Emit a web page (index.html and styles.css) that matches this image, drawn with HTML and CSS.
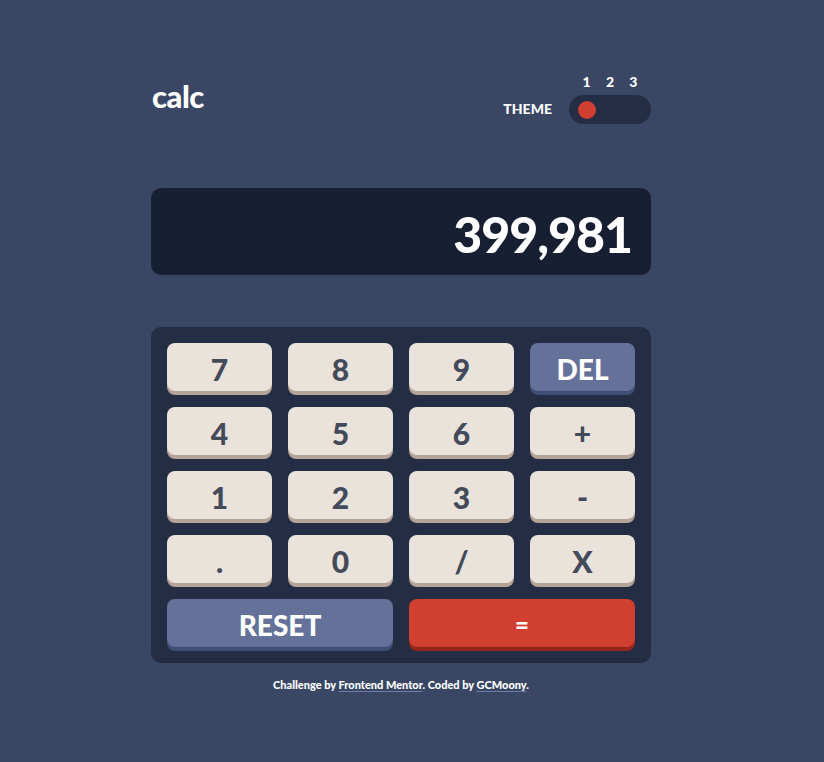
FILE: index.html
```html
<!DOCTYPE html>
<html lang="en">
<head>
<meta charset="utf-8">
<title>calc</title>
<link rel="stylesheet" href="styles.css">
</head>
<body>
<div class="page">
  <main class="calc">
    <header class="header">
      <h1 class="logo">calc</h1>
      <div class="theme">
        <span class="theme-label">THEME</span>
        <div class="switch">
          <div class="switch-nums"><span>1</span><span>2</span><span>3</span></div>
          <div class="switch-track"><span class="switch-knob"></span></div>
        </div>
      </div>
    </header>
    <section class="display"><span class="display-value">399,981</span></section>
    <section class="keypad">
      <button class="key">7</button>
      <button class="key">8</button>
      <button class="key">9</button>
      <button class="key key-blue">DEL</button>
      <button class="key">4</button>
      <button class="key">5</button>
      <button class="key">6</button>
      <button class="key">+</button>
      <button class="key">1</button>
      <button class="key">2</button>
      <button class="key">3</button>
      <button class="key">-</button>
      <button class="key">.</button>
      <button class="key">0</button>
      <button class="key">/</button>
      <button class="key">X</button>
      <button class="key key-blue key-wide">RESET</button>
      <button class="key key-red key-wide">=</button>
    </section>
    <footer class="footer">Challenge by <a href="#">Frontend Mentor</a>. Coded by <a href="#">GCMoony</a>.</footer>
  </main>
</div>
</body>
</html>
```
FILE: styles.css
```css
* { box-sizing: border-box; }
html, body { margin: 0; padding: 0; }
body {
  background: #3a4764;
  font-family: "Lato", "Inter", sans-serif;
  font-weight: 900;
  color: #ffffff;
  min-height: 100vh;
}
.page {
  display: flex;
  justify-content: center;
  padding-right: 22px;
}
.calc {
  width: 500px;
  padding-top: 74px;
}
.header {
  display: flex;
  justify-content: space-between;
  align-items: flex-end;
  height: 50px;
}
.logo {
  margin: 0 0 12px 1px;
  font-size: 31px;
  line-height: 1;
  font-weight: 900;
  letter-spacing: -0.5px;
}
.theme {
  display: flex;
  align-items: flex-end;
  gap: 17px;
}
.theme-label {
  font-size: 14px;
  line-height: 1;
  margin-bottom: 8px;
}
.switch {
  display: flex;
  flex-direction: column;
  gap: 6px;
  width: 82px;
}
.switch-nums {
  display: grid;
  grid-template-columns: repeat(3, 1fr);
  padding: 0 6px;
  font-size: 14px;
  line-height: 15px;
  text-align: center;
}
.switch-track {
  display: grid;
  grid-template-columns: repeat(3, 1fr);
  align-items: center;
  justify-items: center;
  height: 29px;
  padding: 0 6px;
  border-radius: 15px;
  background: #242d44;
}
.switch-knob {
  width: 18px;
  height: 18px;
  border-radius: 50%;
  background: #d03f2f;
}
.display {
  margin-top: 64px;
  height: 87px;
  border-radius: 10px;
  background: #181f33;
  display: flex;
  align-items: center;
  justify-content: flex-end;
  padding: 4px 19px 0 0;
}
.display-value {
  font-size: 50px;
  line-height: 1;
  letter-spacing: -1px;
}
.keypad {
  margin-top: 52px;
  background: #242d44;
  border-radius: 10px;
  padding: 16px;
  display: grid;
  grid-template-columns: repeat(4, 1fr);
  grid-auto-rows: 48px;
  gap: 16px;
}
.key {
  border: none;
  border-radius: 8px;
  background: #eae3dc;
  color: #434a59;
  box-shadow: 0 4px 0 #b3a497;
  font-family: inherit;
  font-weight: 900;
  font-size: 30px;
  line-height: 1;
  padding: 4px 0 0;
  display: flex;
  align-items: center;
  justify-content: center;
}
.key-blue {
  background: #647198;
  color: #ffffff;
  box-shadow: 0 4px 0 #414e73;
  font-size: 28px;
}
.key-red {
  background: #d03f2f;
  color: #ffffff;
  box-shadow: 0 4px 0 #93261a;
  font-size: 24px;
}
.key-wide { grid-column: span 2; }
.footer {
  margin-top: 15px;
  text-align: center;
  font-size: 11px;
  line-height: 14px;
}
.footer a {
  color: #ffffff;
  text-decoration: underline;
  text-decoration-color: #6f7ca6;
  text-underline-offset: 2px;
}
```
